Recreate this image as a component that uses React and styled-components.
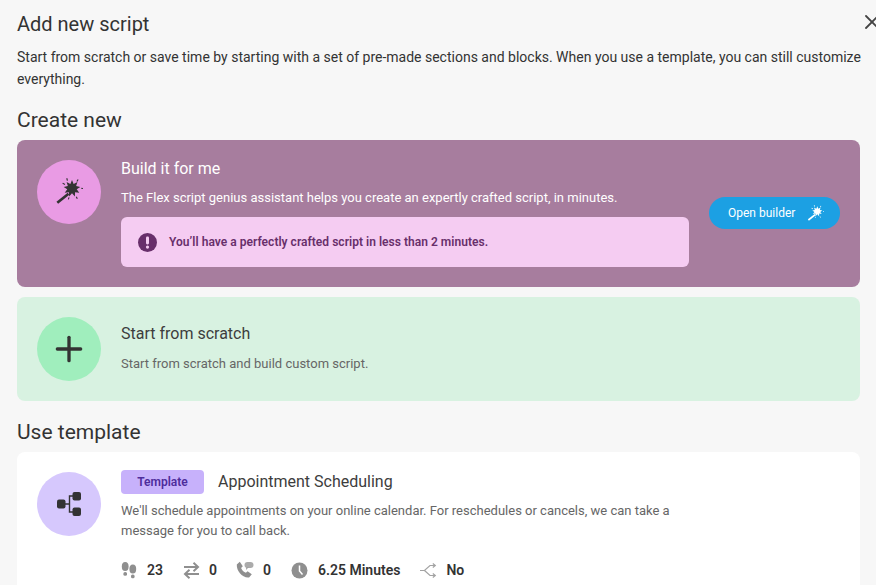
import React from "react";
import styled, { createGlobalStyle } from "styled-components";
import { X, Plus } from "lucide-react";

const Global = createGlobalStyle`
  html, body { margin: 0; padding: 0; height: 100%; overflow: hidden; background: #f7f7f7; }
  body { font-family: Roboto, "Liberation Sans", sans-serif; color: #333; }
`;

const Page = styled.div`
  position: relative;
  width: 876px;
  height: 585px;
  overflow: hidden;
  box-sizing: border-box;
  padding: 13px 16px 0 17px;
`;
const Close = styled.button`
  position: absolute;
  top: 10px;
  left: 860px;
  border: 0;
  padding: 0;
  background: none;
  color: #444;
  display: flex;
`;
const Title = styled.h1`
  margin: 0;
  font-size: 20px;
  line-height: 23px;
  font-weight: 400;
  color: #333;
`;
const Lead = styled.p`
  margin: 10px -4px 0 0;
  font-size: 14px;
  line-height: 22px;
  color: #333;
`;
const Section = styled.h2`
  margin: ${(p) => p.$top}px 0 8px;
  font-size: 21px;
  line-height: 24px;
  font-weight: 400;
  color: #333;
`;
const Card = styled.div`
  display: flex;
  align-items: flex-start;
  gap: 20px;
  padding: 20px;
  margin-bottom: 10px;
  border-radius: 8px;
  background: ${(p) => p.$bg};
`;
const Circle = styled.div`
  flex: none;
  width: 64px;
  height: 64px;
  border-radius: 50%;
  display: flex;
  align-items: center;
  justify-content: center;
  background: ${(p) => p.$bg};
  color: #333;
`;
const Body = styled.div`
  flex: 1;
  min-width: 0;
  margin-top: ${(p) => p.$top || 0}px;
`;
const CardTitle = styled.div`
  font-size: 16px;
  line-height: 19px;
  color: ${(p) => p.$color || "#3d3d3d"};
  margin-bottom: ${(p) => p.$lift || 0}px;
`;
const CardText = styled.div`
  margin-top: ${(p) => p.$top || 11}px;
  font-size: 13px;
  line-height: 20px;
  color: ${(p) => p.$color || "#666"};
`;
const Notice = styled.div`
  display: flex;
  align-items: center;
  gap: 12px;
  box-sizing: border-box;
  width: 568px;
  height: 50px;
  margin-top: 9px;
  padding: 0 17px;
  border-radius: 6px;
  background: #f5ccf2;
  color: #682f6b;
  font-size: 12px;
  font-weight: 600;
  letter-spacing: .03px;
`;
const PillButton = styled.button`
  flex: none;
  display: flex;
  align-items: center;
  gap: 12px;
  box-sizing: border-box;
  width: 131px;
  height: 32px;
  margin-top: 37px;
  padding: 0 0 0 19px;
  border: 0;
  border-radius: 16px;
  background: #1ca0e3;
  color: #fff;
  font-family: inherit;
  font-size: 12px;
`;
const TitleRow = styled.div`
  display: flex;
  align-items: center;
  gap: 14px;
`;
const Badge = styled.span`
  display: inline-flex;
  align-items: center;
  justify-content: center;
  width: 83px;
  height: 24px;
  border-radius: 4px;
  background: #c7b1fb;
  color: #4e2d9c;
  font-size: 12px;
  font-weight: 600;
`;
const Desc = styled.div`
  margin-top: 7px;
  width: 570px;
  font-size: 13px;
  line-height: 20px;
  color: #666;
`;
const Stats = styled.div`
  display: flex;
  align-items: center;
  margin-top: 20px;
`;
const Stat = styled.div`
  display: flex;
  align-items: center;
  gap: ${(p) => p.$gap || 9}px;
  margin-right: ${(p) => p.$right || 0}px;
  font-size: 14px;
  font-weight: 600;
  color: #333;
  svg { flex: none; color: ${(p) => p.$icon || "#8f8f8f"}; }
`;

const starPoints = Array.from({ length: 18 }, (_, i) => {
  const r = i % 2 ? 4.8 : 8.4;
  const a = (i * Math.PI) / 9 - Math.PI / 2;
  return `${(17 + r * Math.cos(a)).toFixed(2)},${(10.5 + r * Math.sin(a)).toFixed(2)}`;
}).join(" ");

const Wand = ({ size = 28, color = "#333" }) => (
  <svg width={size} height={size} viewBox="0 0 28 28" fill={color}>
    <path d="M2.300 24.700 13.500 15.700" stroke={color} strokeWidth="2.700" fill="none" />
    <polygon points={starPoints} />
    <path d="M7.900 4.700l2.300 1.300-.6.9-2.300-1.300zM11.200.4l1.100-.3.7 2.400-1.100.3zM22.600 1.200l1 .5-1.200 2.100-1-.5zM26.400 9.800l1.600.1-.1 1.100-1.600-.1zM20.800 19l1-.5 1 1.900-1 .5zM13.500 19.200l1 .3-.6 2-1-.3z" />
  </svg>
);

const Alert = () => (
  <svg width="19" height="19" viewBox="0 0 19 19">
    <circle cx="9.500" cy="9.500" r="9.500" fill="#682f6b" />
    <rect x="8" y="3.600" width="3" height="7.800" rx="1.300" fill="#f5ccf2" />
    <circle cx="9.500" cy="14.100" r="1.600" fill="#f5ccf2" />
  </svg>
);

const Flow = () => (
  <svg width="26" height="26" viewBox="0 0 26 26" fill="#333">
    <rect x="1" y="8.500" width="8.500" height="9" rx="2" />
    <rect x="16.500" y="1" width="8.500" height="8.500" rx="2" />
    <rect x="16.500" y="16.500" width="8.500" height="8.500" rx="2" />
    <path d="M9 13h4.500M17 5h-3.500v16H17" fill="none" stroke="#333" strokeWidth="1.400" />
  </svg>
);

const Steps = () => (
  <svg width="16" height="17" viewBox="0 0 16 17" fill="currentColor">
    <ellipse cx="4.200" cy="4.500" rx="3.400" ry="4.500" />
    <rect x="2.400" y="10" width="3.600" height="3.800" rx="1.600" />
    <ellipse cx="11.800" cy="7" rx="3.400" ry="4.500" />
    <rect x="10" y="12.500" width="3.600" height="3.800" rx="1.600" />
  </svg>
);

const Transfer = () => (
  <svg width="17" height="17" viewBox="0 0 17 17" fill="none" stroke="currentColor" strokeWidth="2">
    <path d="M1 5h14M10.500.8 15 5l-4.500 4.200" />
    <path d="M16 12H2M6.500 7.800 2 12l4.500 4.200" />
  </svg>
);

const PhoneChat = () => (
  <svg width="18" height="18" viewBox="0 0 18 18" fill="currentColor">
    <path d="M.8 3.500 3.800.8l3 4.400-1.700 1.700c.8 2.100 2.600 4 4.800 4.900l1.700-1.600 4.200 3-2.700 3.200C6.400 17.200.4 10 .8 3.500z" />
    <rect x="8.500" y="1" width="9" height="6" rx="3" opacity=".75" />
    <path d="M10 6.500v2.500l2.500-2.500z" opacity=".75" />
  </svg>
);

const Clock = () => (
  <svg width="17" height="17" viewBox="0 0 17 17">
    <circle cx="8.500" cy="8.500" r="8" fill="currentColor" />
    <path d="M8.500 3.500V9l3 3.500" fill="none" stroke="#fff" strokeWidth="1.500" />
  </svg>
);

const Split = () => (
  <svg width="17" height="15" viewBox="0 0 17 15" fill="none" stroke="currentColor" strokeWidth="1.200">
    <path d="M0 7.500h4.500L10 2.500h5M4.500 7.500l5.500 5h5M12.800.5l2.500 2-2.500 2M12.800 10.500l2.500 2-2.500 2" />
  </svg>
);

export default function App() {
  return (
    <>
      <Global />
      <Page>
        <Close aria-label="Close"><X size={24} strokeWidth={1.8} /></Close>
        <Title>Add new script</Title>
        <Lead>
          Start from scratch or save time by starting with a set of pre-made sections and blocks. When you use a template, you can still customize everything.
        </Lead>
        <Section $top={18}>Create new</Section>
        <Card $bg="#a77d9e">
          <Circle $bg="#e99be4"><Wand /></Circle>
          <Body $top={-1}>
            <CardTitle $color="#fff">Build it for me</CardTitle>
            <CardText $color="#fff" $top={10}>The Flex script genius assistant helps you create an expertly crafted script, in minutes.</CardText>
            <Notice><Alert />You’ll have a perfectly crafted script in less than 2 minutes.</Notice>
          </Body>
          <PillButton>Open builder <Wand size={17} color="#fff" /></PillButton>
        </Card>
        <Card $bg="#d8f2e1">
          <Circle $bg="#a0eebd"><Plus size={40} strokeWidth={2} /></Circle>
          <Body $top={7}>
            <CardTitle>Start from scratch</CardTitle>
            <CardText>Start from scratch and build custom script.</CardText>
          </Body>
        </Card>
        <Section $top={19}>Use template</Section>
        <Card $bg="#fff">
          <Circle $bg="#d6c8fd"><Flow /></Circle>
          <Body $top={-2}>
            <TitleRow>
              <Badge>Template</Badge>
              <CardTitle $lift={2}>Appointment Scheduling</CardTitle>
            </TitleRow>
            <Desc>We'll schedule appointments on your online calendar. For reschedules or cancels, we can take a message for you to call back.</Desc>
            <Stats>
              <Stat $right={20} $gap={10}><Steps />23</Stat>
              <Stat $right={19}><Transfer />0</Stat>
              <Stat $right={20}><PhoneChat />0</Stat>
              <Stat $right={20} $gap={10}><Clock />6.25 Minutes</Stat>
              <Stat $icon="#a3a3a3"><Split />No</Stat>
            </Stats>
          </Body>
        </Card>
      </Page>
    </>
  );
}
